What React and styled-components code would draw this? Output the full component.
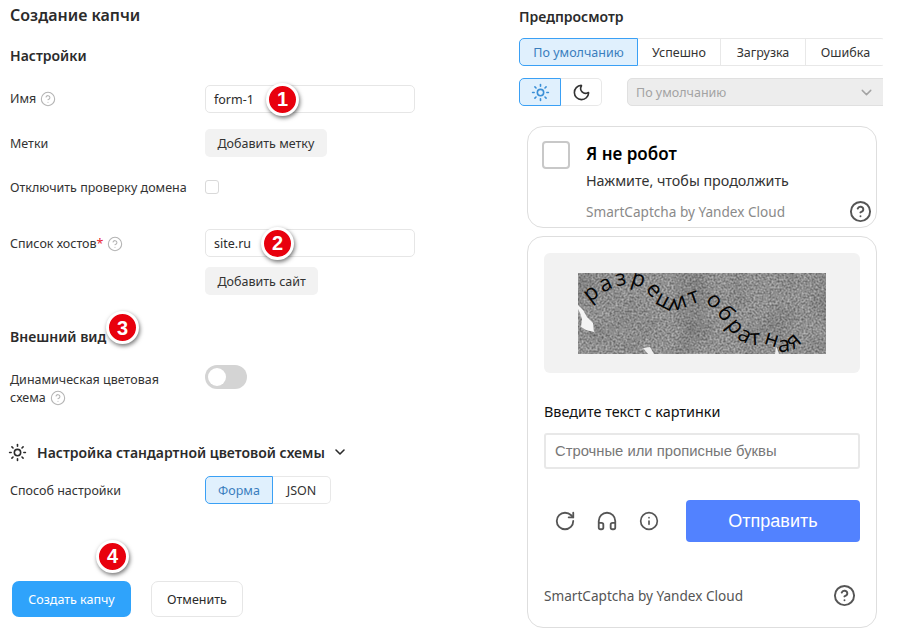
import React from "react";
import styled, { createGlobalStyle } from "styled-components";
import { ChevronDown, CircleHelp, Headphones, Info, Moon, RotateCw, Sun } from "lucide-react";

const GlobalStyle = createGlobalStyle`
  html, body {
    margin: 0;
    padding: 0;
    background: #fff;
  }
  body {
    width: 900px;
    height: 640px;
    overflow: hidden;
    font-family: "Noto Sans", "Open Sans", sans-serif;
    color: #2b2b2b;
  }
  * {
    box-sizing: border-box;
  }
`;

const Page = styled.div`
  display: grid;
  grid-template-columns: 519px 364px;
  width: 900px;
  height: 640px;
`;

const FormColumn = styled.div`
  display: flex;
  flex-direction: column;
  padding: 5px 0 0 10px;
`;

const PageTitle = styled.h1`
  margin: 0;
  height: 20px;
  font-size: 16px;
  line-height: 20px;
  font-weight: 600;
`;

const SectionTitle = styled.h2`
  position: relative;
  display: flex;
  align-items: center;
  margin: ${(p) => p.$top || 0}px 0 0;
  height: 20px;
  font-size: 14px;
  line-height: 20px;
  font-weight: 600;
`;

const Row = styled.div`
  display: grid;
  grid-template-columns: 195px 210px;
  align-items: ${(p) => (p.$start ? "start" : "center")};
  margin-top: ${(p) => p.$top || 0}px;
  min-height: 28px;
`;

const Label = styled.div`
  padding-top: ${(p) => p.$pad || 0}px;
  font-size: 12.5px;
  line-height: 18px;
  color: #333;
`;

const Required = styled.span`
  color: #e8222e;
`;

const HelpMark = styled(CircleHelp)`
  display: inline-block;
  vertical-align: -4px;
  margin-left: 4px;
  width: 16px;
  height: 16px;
  color: #b4b4b4;
  stroke-width: 1.6;
`;

const InputBox = styled.div`
  position: relative;
  display: flex;
  align-items: center;
  width: 210px;
  height: 28px;
  padding: 0 8px;
  border: 1px solid #e6e6e6;
  border-radius: 5px;
  font-size: 12.5px;
`;

const GreyButton = styled.div`
  display: inline-flex;
  align-items: center;
  width: fit-content;
  height: 28px;
  padding: 0 12.5px;
  border-radius: 5px;
  background: #f2f2f2;
  font-size: 12.5px;
  color: #333;
`;

const Stack = styled.div`
  margin: 10px 0 0 195px;
`;

const CheckBox = styled.div`
  width: 14px;
  height: 14px;
  border: 1px solid #d9d9d9;
  border-radius: 3px;
`;

const Toggle = styled.div`
  display: flex;
  align-items: center;
  width: 42px;
  height: 24px;
  padding: 0 3px;
  border-radius: 12px;
  background: #d4d4d4;

  &::before {
    content: "";
    width: 18px;
    height: 18px;
    border-radius: 50%;
    background: #fff;
  }
`;

const SchemeTitle = styled.div`
  display: flex;
  align-items: center;
  margin-top: 35px;
  margin-left: -2px;
  height: 20px;
  font-size: 14px;
  font-weight: 600;

  & > svg:first-child {
    width: 19px;
    height: 19px;
    margin-right: 10px;
  }
  & > svg:last-child {
    width: 16px;
    height: 16px;
    margin-left: 7px;
    stroke-width: 2.4;
  }
`;

const Segments = styled.div`
  display: flex;
  width: fit-content;
  height: 28px;
  margin-top: ${(p) => p.$top || 0}px;
`;

const Segment = styled.div`
  display: flex;
  align-items: center;
  justify-content: center;
  flex: none;
  width: ${(p) => p.$w}px;
  height: 28px;
  font-size: 12.5px;
  border: 1px solid ${(p) => (p.$active ? "#3aa0f5" : "#e8e8e8")};
  border-left-width: ${(p) => (p.$active || p.$first ? 1 : 0)}px;
  border-radius: ${(p) => p.$radius || "0"};
  background: ${(p) => (p.$active ? "#e0f0fd" : "#fff")};
  color: ${(p) => (p.$active ? "#3a7ebd" : "#333")};

  & svg {
    width: 19px;
    height: 19px;
  }
`;

const Actions = styled.div`
  position: relative;
  display: flex;
  gap: 20px;
  margin: 77px 0 0 2px;
`;

const PrimaryButton = styled.div`
  display: flex;
  align-items: center;
  justify-content: center;
  width: 119px;
  height: 36px;
  border-radius: 7px;
  background: #2fa3fb;
  color: #fff;
  font-size: 12.5px;
`;

const CancelButton = styled.div`
  display: flex;
  align-items: center;
  justify-content: center;
  width: 92px;
  height: 36px;
  border: 1px solid #e6e6e6;
  border-radius: 7px;
  font-size: 12.5px;
`;

const Badge = styled.div`
  position: absolute;
  left: ${(p) => p.$x}px;
  top: ${(p) => p.$y}px;
  display: flex;
  align-items: center;
  justify-content: center;
  width: 33px;
  height: 33px;
  border: 3px solid #fff;
  border-radius: 50%;
  background: #e8000d;
  box-shadow: 1px 2px 4px rgba(0, 0, 0, 0.55);
  color: #fff;
  font-family: "Liberation Sans", sans-serif;
  font-size: 20px;
  font-weight: 700;
`;

const PreviewColumn = styled.div`
  display: flex;
  flex-direction: column;
  overflow: hidden;
  padding-top: 7px;
`;

const PreviewTitle = styled.div`
  height: 20px;
  font-size: 14px;
  line-height: 20px;
  font-weight: 600;
`;

const ThemeRow = styled.div`
  display: flex;
  margin-top: 12px;
`;

const Select = styled.div`
  display: flex;
  align-items: center;
  justify-content: space-between;
  flex: none;
  width: 262px;
  height: 28px;
  margin-left: 25px;
  padding: 0 13px 0 8px;
  border: 1px solid #e0e0e0;
  border-radius: 5px;
  background: #ededed;
  color: #a3a3a3;
  font-size: 12.5px;

  & svg {
    width: 17px;
    height: 17px;
  }
`;

const Card = styled.div`
  display: flex;
  flex-direction: column;
  width: 350px;
  height: ${(p) => p.$h}px;
  margin: ${(p) => p.$top}px 0 0 8px;
  border: 1px solid #dedede;
  border-radius: 16px;
`;

const RobotCard = styled(Card)`
  display: grid;
  grid-template-columns: 28px 1fr;
  column-gap: 16px;
  padding: 14px 4px 0 14px;
`;

const BigCheck = styled.div`
  width: 28px;
  height: 28px;
  border: 2px solid #c8c8c8;
  border-radius: 4px;
`;

const RobotTitle = styled.div`
  height: 26px;
  font-size: 17px;
  line-height: 26px;
  font-weight: 600;
  color: #000;
`;

const RobotText = styled.div`
  margin-top: 2px;
  height: 24px;
  font-size: 14.3px;
  line-height: 24px;
  color: #333;
`;

const CardFooter = styled.div`
  display: flex;
  align-items: center;
  justify-content: space-between;
  height: 22px;
  margin-top: ${(p) => p.$top || 0}px;
  font-size: 13.6px;
  color: ${(p) => p.$color};

  & svg {
    width: 23px;
    height: 23px;
    color: #555;
    stroke-width: 2;
  }
`;

const ImageWrap = styled.div`
  display: flex;
  align-items: center;
  justify-content: center;
  height: 120px;
  border-radius: 6px;
  background: #f2f2f2;
`;

const CaptchaBody = styled(Card)`
  padding: 16px 16px 0 16px;
`;

const EnterLabel = styled.div`
  margin-top: 28px;
  height: 22px;
  font-size: 14.4px;
  line-height: 22px;
  color: #111;
`;

const CaptchaInput = styled.div`
  display: flex;
  align-items: center;
  margin-top: 10px;
  height: 36px;
  padding: 0 9px;
  border: 2px solid #e8e8e8;
  border-radius: 3px;
  font-family: "Liberation Sans", sans-serif;
  font-size: 14.8px;
  color: #777;
`;

const ControlRow = styled.div`
  display: flex;
  align-items: center;
  margin-top: 31px;
  height: 42px;
`;

const IconSlot = styled.div`
  display: flex;
  justify-content: center;
  width: 42px;
  color: #555;

  & svg {
    width: ${(p) => p.$size || 20}px;
    height: ${(p) => p.$size || 20}px;
    stroke-width: 2;
  }
`;

const SubmitButton = styled.div`
  display: flex;
  align-items: center;
  justify-content: center;
  width: 174px;
  height: 42px;
  margin-left: auto;
  border-radius: 4px;
  background: #5282ff;
  color: #fff;
  font-family: "Liberation Sans", sans-serif;
  font-size: 18px;
`;

const FooterGap = styled.div`
  height: 42px;
`;

const FooterHelp = styled.span`
  display: flex;
  margin-right: 4px;
`;

const CaptchaImage = () => (
  <svg width="248" height="81" viewBox="0 0 248 81">
    <defs>
      <filter id="stone" x="0" y="0" width="100%" height="100%" colorInterpolationFilters="sRGB">
        <feTurbulence type="fractalNoise" baseFrequency="0.5" numOctaves="2" seed="7" />
        <feColorMatrix
          type="matrix"
          values="0.55 0 0 0 0.29  0.55 0 0 0 0.29  0.55 0 0 0 0.29  0 0 0 0 1"
        />
        <feGaussianBlur stdDeviation="0.5" />
      </filter>
      <filter id="cloud" x="0" y="0" width="100%" height="100%">
        <feTurbulence type="fractalNoise" baseFrequency="0.03" numOctaves="2" seed="4" />
        <feColorMatrix
          type="matrix"
          values="0 0 0 0 0  0 0 0 0 0  0 0 0 0 0  1.4 0 0 0 -0.6"
        />
      </filter>
      <path
        id="wave"
        d="M12 30 C 28 15, 50 6, 66 16 C 76 26, 82 36, 92 37 C 104 38, 114 30, 124 28 C 132 30, 140 42, 148 52 C 155 62, 162 70, 174 72 C 184 72, 192 70, 201 77 C 210 82, 224 76, 242 44"
      />
    </defs>
    <rect width="248" height="81" filter="url(#stone)" />
    <rect width="248" height="81" filter="url(#cloud)" opacity="0.2" />
    <path d="M0 32 L5 37 L9 44 L15 50 L16 59 L8 57 L3 54 L4 46 L2 40 L0 36 Z" fill="#f4f4f4" />
    <path d="M65 75 L72 74 L76 81 L70 81 Z" fill="#eee" />
    <path d="M198 73 L201 81 L197 81 Z" fill="#eee" />
    <text
      fontFamily="'Open Sans', sans-serif"
      fontWeight="400"
      fontSize="22"
      fill="#050505"
      letterSpacing="2.8"
      wordSpacing="-7"
    >
      <textPath href="#wave">разрешит обратная</textPath>
    </text>
  </svg>
);

export default function App() {
  return (
    <>
      <GlobalStyle />
      <Page>
        <FormColumn>
          <PageTitle>Создание капчи</PageTitle>
          <SectionTitle $top={21}>Настройки</SectionTitle>
          <Row $top={19}>
            <Label>
              Имя
              <HelpMark />
            </Label>
            <InputBox>
              form-1
              <Badge $x={60} $y={-3}>1</Badge>
            </InputBox>
          </Row>
          <Row $top={16}>
            <Label $pad={2}>Метки</Label>
            <GreyButton>Добавить метку</GreyButton>
          </Row>
          <Row $top={16}>
            <Label $pad={2}>Отключить проверку домена</Label>
            <CheckBox />
          </Row>
          <Row $top={28}>
            <Label $pad={2}>
              Список хостов<Required>*</Required>
              <HelpMark />
            </Label>
            <InputBox>
              site.ru
              <Badge $x={55} $y={-3}>2</Badge>
            </InputBox>
          </Row>
          <Stack>
            <GreyButton>Добавить сайт</GreyButton>
          </Stack>
          <SectionTitle $top={32}>
            Внешний вид
            <Badge $x={96} $y={-16}>3</Badge>
          </SectionTitle>
          <Row $top={18} $start>
            <Label $pad={6}>
              Динамическая цветовая
              <br />
              схема
              <HelpMark />
            </Label>
            <Toggle />
          </Row>
          <SchemeTitle>
            <Sun />
            Настройка стандартной цветовой схемы
            <ChevronDown />
          </SchemeTitle>
          <Row $top={14}>
            <Label $pad={2}>Способ настройки</Label>
            <Segments>
              <Segment $w={68} $active $radius="5px 0 0 5px">Форма</Segment>
              <Segment $w={58} $radius="0 5px 5px 0">JSON</Segment>
            </Segments>
          </Row>
          <Actions>
            <Badge $x={84} $y={-41}>4</Badge>
            <PrimaryButton>Создать капчу</PrimaryButton>
            <CancelButton>Отменить</CancelButton>
          </Actions>
        </FormColumn>

        <PreviewColumn>
          <PreviewTitle>Предпросмотр</PreviewTitle>
          <Segments $top={11}>
            <Segment $w={119} $active $radius="5px 0 0 5px">По умолчанию</Segment>
            <Segment $w={83}>Успешно</Segment>
            <Segment $w={85}>Загрузка</Segment>
            <Segment $w={80} $radius="0 5px 5px 0">Ошибка</Segment>
          </Segments>
          <ThemeRow>
            <Segments>
              <Segment $w={42} $active $radius="5px 0 0 5px">
                <Sun color="#3a8fd6" />
              </Segment>
              <Segment $w={41} $radius="0 5px 5px 0">
                <Moon color="#333" />
              </Segment>
            </Segments>
            <Select>
              По умолчанию
              <ChevronDown />
            </Select>
          </ThemeRow>
          <RobotCard $h={102} $top={20}>
            <BigCheck />
            <div>
              <RobotTitle>Я не робот</RobotTitle>
              <RobotText>Нажмите, чтобы продолжить</RobotText>
              <CardFooter $color="#8a8a8a" $top={7}>
                SmartCaptcha by Yandex Cloud
                <CircleHelp />
              </CardFooter>
            </div>
          </RobotCard>
          <CaptchaBody $h={392} $top={8}>
            <ImageWrap>
              <CaptchaImage />
            </ImageWrap>
            <EnterLabel>Введите текст с картинки</EnterLabel>
            <CaptchaInput>Строчные или прописные буквы</CaptchaInput>
            <ControlRow>
              <IconSlot $size={22}><RotateCw /></IconSlot>
              <IconSlot $size={22}><Headphones /></IconSlot>
              <IconSlot><Info /></IconSlot>
              <SubmitButton>Отправить</SubmitButton>
            </ControlRow>
            <FooterGap />
            <CardFooter $color="#555">
              SmartCaptcha by Yandex Cloud
              <FooterHelp><CircleHelp /></FooterHelp>
            </CardFooter>
          </CaptchaBody>
        </PreviewColumn>
      </Page>
    </>
  );
}
